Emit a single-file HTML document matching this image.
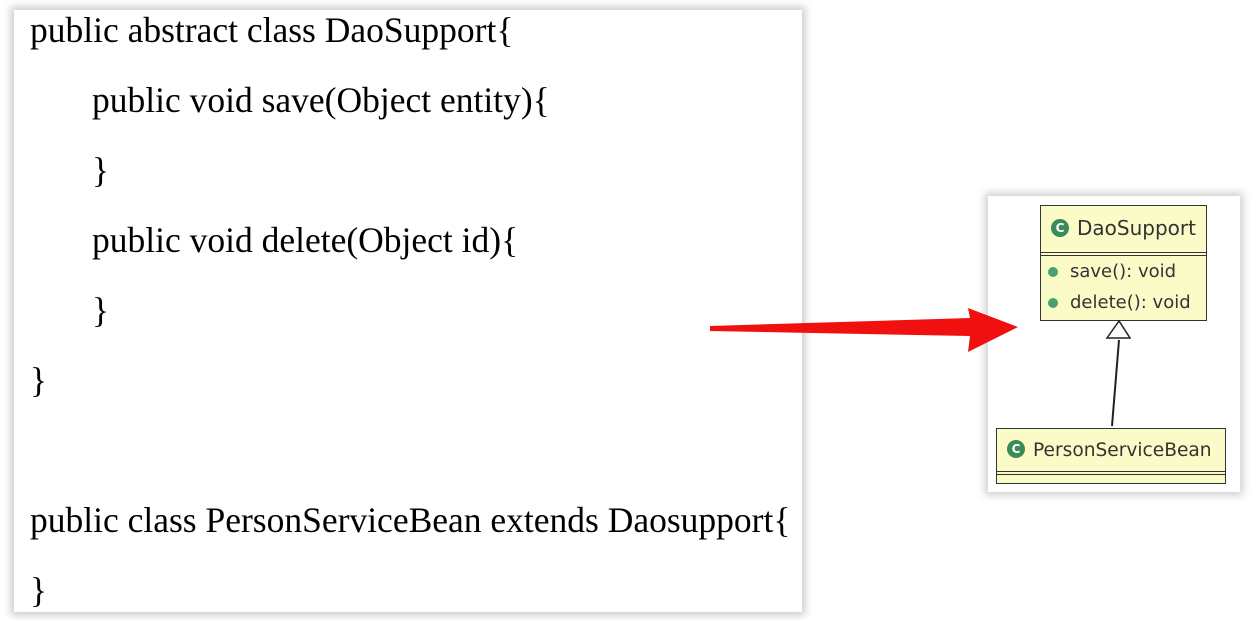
<!DOCTYPE html>
<html><head><style>
body{margin:0;width:1254px;height:620px;background:#fff;position:relative;overflow:hidden;font-family:"Liberation Serif",serif}
.panel{position:absolute;left:14px;top:10px;width:788px;height:602px;background:#fff;box-shadow:0 0 8px 3px rgba(0,0,0,0.22)}
.l{position:absolute;font-size:35.5px;color:#000;white-space:nowrap;line-height:40px}
.dia{position:absolute;left:988px;top:196px;width:252px;height:296px;background:#fff;box-shadow:0 0 8px 3px rgba(0,0,0,0.2)}
.box{position:absolute;background:#fbfbc8;border:1.5px solid #333;font-family:"DejaVu Sans","Liberation Sans",sans-serif;color:#333}
.c{display:inline-block;width:18px;height:18px;border-radius:50%;background:#3a8a5a;color:#fff;font-size:12px;font-weight:bold;text-align:center;line-height:18px;vertical-align:middle;margin-right:8px;position:relative;top:-2px}
.d{display:inline-block;width:10px;height:10px;border-radius:50%;background:#4aa070;vertical-align:middle;margin:0 12px 0 7px}
</style></head><body>
<div class="panel"></div>
<div class="l" style="left:30px;top:10px">public abstract class DaoSupport{</div>
<div class="l" style="left:92px;top:80px">public void save(Object entity){</div>
<div class="l" style="left:92px;top:150px">}</div>
<div class="l" style="left:92px;top:220px">public void delete(Object id){</div>
<div class="l" style="left:92px;top:290px">}</div>
<div class="l" style="left:30px;top:360px">}</div>
<div class="l" style="left:30px;top:500px">public class PersonServiceBean extends Daosupport{</div>
<div class="l" style="left:30px;top:570px">}</div>
<div class="dia"></div>
<div class="box" style="left:1040px;top:205px;width:165px;height:114px">
 <div style="height:50px;line-height:44px;padding-left:10px;font-size:20px;border-bottom:4px double #333;box-sizing:border-box;white-space:nowrap"><span class="c">C</span>DaoSupport</div>
 <div style="font-size:18px;line-height:31px;white-space:nowrap"><div><span class="d"></span>save(): void</div><div><span class="d"></span>delete(): void</div></div>
</div>
<div class="box" style="left:996px;top:428px;width:228px;height:54px">
 <div style="height:46px;line-height:44px;padding-left:10px;font-size:18.6px;border-bottom:4px double #333;box-sizing:border-box;white-space:nowrap"><span class="c">C</span>PersonServiceBean</div>
</div>
<svg style="position:absolute;left:0;top:0" width="1254" height="620">
<line x1="1119" y1="340" x2="1112" y2="426" stroke="#222" stroke-width="2"/>
<polygon points="1119,321 1107,338 1130,338" fill="#fff" stroke="#222" stroke-width="1.5"/>
<polygon points="710,326 970,318 968,308 1018,327 968,352 970,336 710,331" fill="#f01010"/>
</svg>
</body></html>
